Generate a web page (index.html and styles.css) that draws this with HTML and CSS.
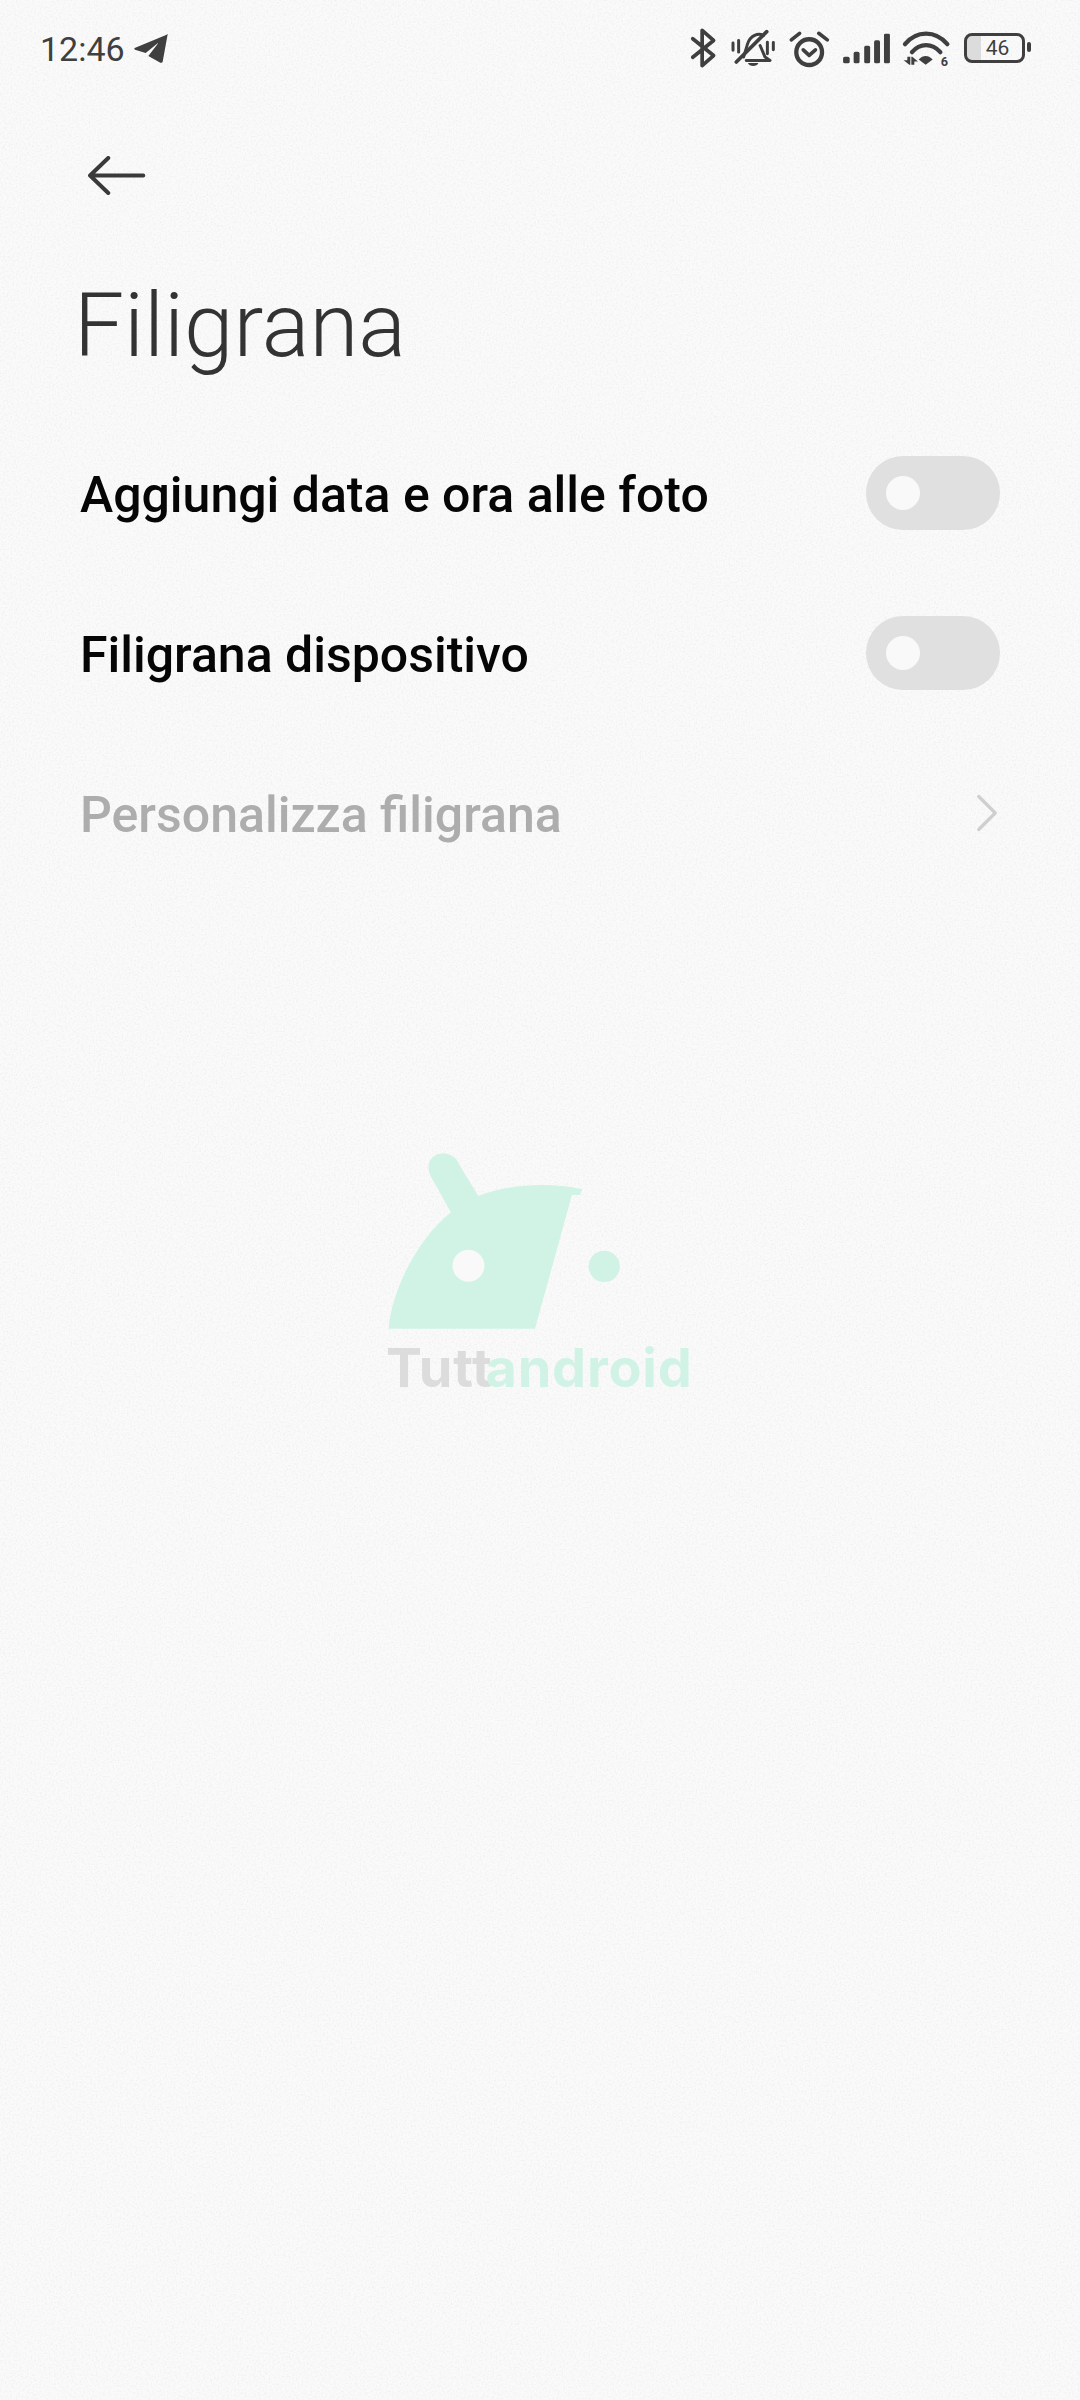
FILE: index.html
```html
<!DOCTYPE html>
<html lang="it">
<head>
<meta charset="utf-8">
<title>Filigrana</title>
<link rel="stylesheet" href="styles.css">
</head>
<body>
<svg class="grain" width="1080" height="2400" aria-hidden="true">
  <filter id="noise" x="0" y="0" width="100%" height="100%">
    <feTurbulence type="fractalNoise" baseFrequency="0.55" numOctaves="2" seed="4"/>
    <feColorMatrix type="matrix" values="0 0 0 0 0.8  0 0 0 0 0.8  0 0 0 0 0.8  1.2 0 0 0 -0.52"/>
  </filter>
  <rect width="1080" height="2400" filter="url(#noise)"/>
</svg>

<div class="phone">
  <header class="status">
    <div class="status-left">
      <span class="time">12:46</span>
      <svg class="ic-telegram" viewBox="400 103 102 90"><path d="M498 105 402 145c-2 2-1 4 1 5l32 10 36-29c1-1 3 0-2 4l-26 34 36 20c3 1 6 0 7-3l15-82c0-2-1-1-3 1z"/></svg>
    </div>
    <div class="status-right">
      <svg class="ic-bt" viewBox="90 50 80 125"><path d="M98 85 160 135 126 165V60L160 90 98 140"/></svg>
      <svg class="ic-mute" viewBox="210 55 140 118">
        <path class="st" d="M228 155 320 63"/>
        <path class="st thin" d="M250 140 262 100C270 75 295 65 310 75M300 105 315 140 330 150H258"/>
        <path class="fl" d="M263 158h32c-4 12-28 12-32 0z"/>
        <path class="st thin" d="M218 97v22M235 90v35M322 95v35M340 96v22"/>
      </svg>
      <svg class="ic-alarm" viewBox="385 55 128 112">
        <circle class="st wide" cx="448" cy="122" r="39"/>
        <path class="st" d="M394 85 419 65M477 65 503 85M430 115 448 132 467 115"/>
      </svg>
      <svg class="ic-signal" viewBox="545 68 148 94">
        <rect x="548" y="140" width="20" height="20" rx="5"/>
        <rect x="580" y="125" width="18" height="35" rx="5"/>
        <rect x="612" y="107" width="18" height="53" rx="5"/>
        <rect x="642" y="90" width="18" height="70" rx="5"/>
        <rect x="672" y="70" width="18" height="90" rx="4"/>
      </svg>
      <svg class="ic-wifi" viewBox="726 62 144 110">
        <path class="st wide" d="M735 104C770 62 826 62 862 104M756 128C780 100 816 100 841 128"/>
        <path class="fl" d="M776 150C790 136 804 136 818 150L797 166z"/>
        <path class="fl" d="M742 142h9v24h-3l-17-14h11zM754 142h3l17 14h-11v10h-9z"/>
        <text class="wifi-6" x="842" y="168">6</text>
      </svg>
      <div class="battery"><span class="battery-num">46</span></div>
    </div>
  </header>

  <svg class="back" viewBox="262 470 176 118"><path d="M431 529H272M325 476 270 529 325 582"/></svg>

  <h1 class="title">Filigrana</h1>

  <main class="list">
    <div class="row">
      <span class="label">Aggiungi data e ora alle foto</span>
      <span class="toggle"><span class="knob"></span></span>
    </div>
    <div class="row">
      <span class="label">Filigrana dispositivo</span>
      <span class="toggle"><span class="knob"></span></span>
    </div>
    <div class="row disabled">
      <span class="label">Personalizza filigrana</span>
      <svg class="chevron" viewBox="0 0 24 40"><path d="M3 2 21 20 3 38"/></svg>
    </div>
  </main>

  <div class="watermark">
    <svg class="wm-logo" viewBox="0 0 1080 610">
      <path class="wm-shape" d="M85 597C95 480 170 330 272 247L212 140C195 105 210 72 248 70 272 70 290 85 298 105L355 198C440 165 560 155 667 178L660 195 636 195 525 597z"/>
      <circle class="wm-hole" cx="325" cy="408" r="48"/>
      <circle class="wm-shape" cx="733" cy="410" r="47"/>
    </svg>
    <div class="wm-text"><span class="wm-gray">Tutt</span><span class="wm-green">android</span></div>
  </div>
</div>
</body>
</html>
```

FILE: styles.css
```css
* { box-sizing: border-box; }
html, body { margin: 0; padding: 0; }
body {
  width: 1080px;
  height: 2400px;
  background: #fafafa;
  font-family: Roboto, "Liberation Sans", sans-serif;
  position: relative;
  overflow: hidden;
}
.grain { position: absolute; left: 0; top: 0; pointer-events: none; }
.phone { position: relative; height: 2400px; }

.status {
  height: 98px;
  padding: 24px 55px 0 40px;
  display: flex;
  justify-content: space-between;
  align-items: flex-start;
  color: #3c3c3c;
}
.status-left { display: flex; align-items: center; gap: 9px; height: 50px; }
.time { font-size: 34px; line-height: 50px; color: #3f3f3f; }
.ic-telegram { width: 34px; height: 30px; fill: #3f3f3f; }
.status-right { display: flex; align-items: center; height: 48px; }
.status-right svg { fill: #3f3f3f; display: block; overflow: visible; }
.st { fill: none; stroke: #3f3f3f; stroke-width: 11; stroke-linecap: round; stroke-linejoin: round; }
.st.thin { stroke-width: 9; }
.st.wide { stroke-width: 13; }
.status-right .fl { fill: #3f3f3f; }
.ic-bt { width: 27px; height: 42px; margin-right: 13px; }
.ic-bt path { fill: none; stroke: #3f3f3f; stroke-width: 11; stroke-linejoin: round; stroke-linecap: round; }
.ic-mute { width: 47px; height: 39px; margin-right: 11px; }
.ic-alarm { width: 43px; height: 37px; margin-right: 11px; }
.ic-signal { width: 49px; height: 31px; margin-right: 11px; }
.ic-wifi { width: 48px; height: 37px; margin-right: 14px; }
.wifi-6 { font-family: Roboto, sans-serif; font-weight: 700; font-size: 38px; fill: #3f3f3f; }
.battery {
  width: 61px;
  height: 30px;
  border: 3.5px solid #3f3f3f;
  border-radius: 8px;
  position: relative;
  display: flex;
  align-items: center;
  justify-content: center;
  padding-left: 6px;
  background: linear-gradient(90deg, #dcdcdc 0 14px, transparent 14px);
  background-origin: padding-box;
}
.battery::after {
  content: "";
  position: absolute;
  right: -9px;
  top: 6px;
  width: 4px;
  height: 10px;
  border-radius: 2px;
  background: #3f3f3f;
}
.battery-num { font-size: 21px; line-height: 1; color: #3f3f3f; }

.back {
  display: block;
  width: 59px;
  height: 39px;
  margin: 58px 0 0 87px;
  fill: none;
  stroke: #3a3a3a;
  stroke-width: 12;
  stroke-linecap: round;
  stroke-linejoin: round;
}

.title {
  margin: 81px 0 0 74px;
  font-weight: 300;
  font-size: 89px;
  line-height: 100px;
  color: #333333;
}

.list { margin-top: 37px; padding: 0 80px; display: flex; flex-direction: column; }
.row { height: 160px; display: flex; align-items: center; justify-content: space-between; }
.label { font-size: 50px; font-weight: 500; color: #060606; padding-top: 4px; }
.disabled .label { color: #adadad; }
.toggle {
  width: 134px;
  height: 74px;
  border-radius: 37px;
  background: #e0e0e0;
  display: flex;
  align-items: center;
  padding-left: 20px;
}
.knob { width: 34px; height: 34px; border-radius: 50%; background: #f9f9f9; }
.chevron {
  width: 22px;
  height: 38px;
  margin-right: 2px;
  fill: none;
  stroke: #cfcfcf;
  stroke-width: 3.5;
  stroke-linecap: round;
  stroke-linejoin: round;
}

.watermark { position: absolute; left: 360px; top: 1130px; width: 360px; }
.wm-logo { display: block; width: 360px; height: 203px; }
.wm-shape { fill: #d0f3e5; }
.wm-hole { fill: #f9f9f9; }
.wm-text {
  font-family: Inter, "Open Sans", sans-serif;
  font-weight: 700;
  font-size: 54px;
  line-height: 60px;
  letter-spacing: 0.8px;
  margin: 5px 0 0 26px;
  white-space: nowrap;
}
.wm-gray { color: #dcdcdc; }
.wm-green { color: #d0f3e5; margin-left: -7px; }
```
